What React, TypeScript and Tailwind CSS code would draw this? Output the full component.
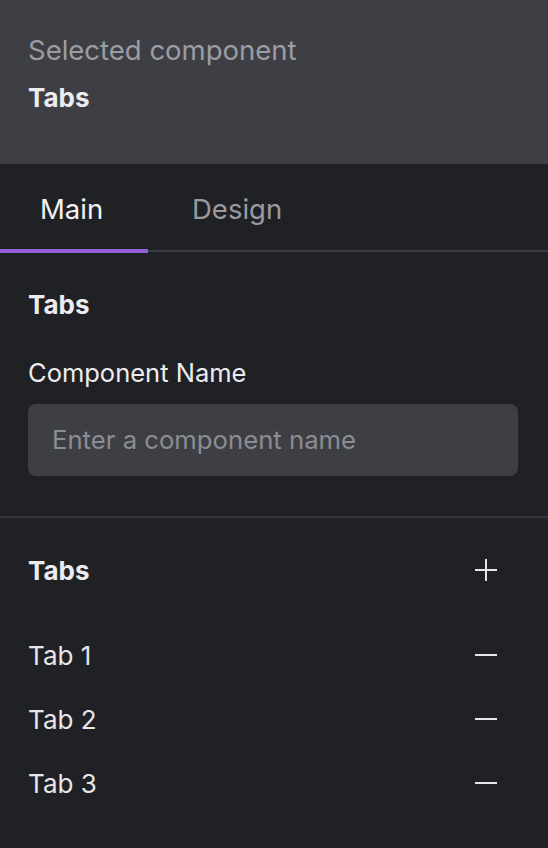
import React from "react";

const font = { fontFamily: "Inter, 'Noto Sans', sans-serif" };

function Plus() {
  return (
    <svg width="24" height="24" viewBox="0 0 24 24" className="block">
      <path d="M12 1v22M1 12h22" stroke="#e6e6e9" strokeWidth="2" fill="none" />
    </svg>
  );
}

function Minus() {
  return (
    <svg width="24" height="24" viewBox="0 0 24 24" className="block">
      <path d="M1 12h22" stroke="#e6e6e9" strokeWidth="2" fill="none" />
    </svg>
  );
}

export default function App() {
  return (
    <div className="w-[548px] h-[848px] bg-[#202125] overflow-hidden flex flex-col" style={font}>
      <div className="h-[164px] bg-[#3e3f44] px-[28px] pt-[34px] flex flex-col gap-[16px] shrink-0">
        <div className="text-[27.5px] leading-[32px] text-[#9c9da2]">Selected component</div>
        <div className="text-[26px] leading-[32px] font-bold text-[#ececef]">Tabs</div>
      </div>

      <div className="relative h-[88px] flex items-stretch border-b-2 border-[#3a3b40] shrink-0">
        <div className="relative w-[148px] flex items-center pl-[40px] text-[27.5px] text-[#f2f2f4] pt-[5px]">
          Main
          <div className="absolute left-0 right-0 bottom-[-3px] h-[4px] bg-[#9460d9]" />
        </div>
        <div className="flex items-center pl-[44px] text-[27.5px] text-[#9a9ba0] pt-[5px]">Design</div>
      </div>

      <div className="px-[28px] pt-[37px] pb-[40px] flex flex-col border-b-2 border-[#35363b]">
        <div className="text-[26px] leading-[32px] font-bold text-[#ececef]">Tabs</div>
        <div className="mt-[36px] text-[25.5px] leading-[32px] text-[#ececef]">Component Name</div>
        <div className="mt-[15px] mr-[2px] h-[72px] rounded-[8px] bg-[#3e3f44] flex items-center px-[24px] text-[25.7px] text-[#8c8d92]">
          Enter a component name
        </div>
      </div>

      <div className="px-[28px] pt-[36px] flex flex-col">
        <div className="flex items-center justify-between h-[32px]">
          <div className="text-[26px] font-bold text-[#ececef]">Tabs</div>
          <div className="mr-[22px]"><Plus /></div>
        </div>
        <div className="mt-[37px] flex flex-col">
          {["Tab 1", "Tab 2", "Tab 3"].map((t) => (
            <div key={t} className="h-[64px] flex items-center justify-between">
              <div className="text-[26px] text-[#e6e6e9]">{t}</div>
              <div className="mr-[22px]"><Minus /></div>
            </div>
          ))}
        </div>
      </div>
    </div>
  );
}
